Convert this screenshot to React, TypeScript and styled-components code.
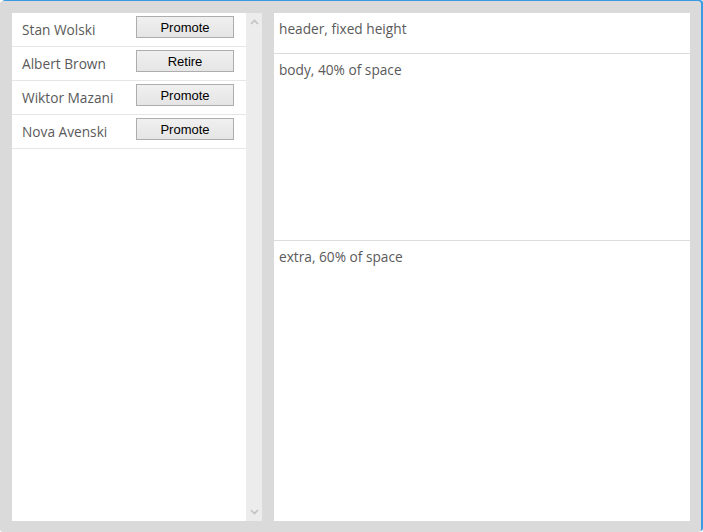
import styled, { createGlobalStyle } from "styled-components";

const GlobalStyle = createGlobalStyle`
  html, body {
    margin: 0;
    padding: 0;
    background: #ffffff;
  }
  * {
    box-sizing: border-box;
  }
`;

const StFrame = styled.div`
  display: flex;
  gap: 12px;
  width: 701px;
  height: 531px;
  margin-top: 1px;
  padding: 12px 11px 11px 12px;
  background-color: #dadada;
  border-radius: 3px;
  box-shadow: 2px -1px 0 #3a9be2;
  font-family: "Open Sans", "Noto Sans", sans-serif;
  font-size: 13.7px;
  color: #5a5a5a;
`;

const StListPanel = styled.div`
  display: flex;
  width: 250px;
  background-color: #ffffff;
`;

const StList = styled.div`
  flex: 1 0;
  display: flex;
  flex-direction: column;
`;

const StRow = styled.div`
  display: flex;
  height: 34px;
  padding: 0 12px 0 10px;
  border-bottom: 1px solid #e6e6e6;
`;

const StName = styled.span`
  width: 114px;
  line-height: 33px;
  white-space: nowrap;
`;

const StButton = styled.button`
  width: 98px;
  height: 22px;
  margin-top: 3px;
  padding: 0;
  border: 1px solid #adadad;
  border-radius: 0;
  background: linear-gradient(#f0f0f0, #e5e5e5);
  font-family: "Liberation Sans", Arial, sans-serif;
  font-size: 13px;
  color: #000000;
`;

const StScrollbar = styled.div`
  display: flex;
  flex-direction: column;
  justify-content: space-between;
  align-items: center;
  width: 16px;
  padding: 6px 0;
  background-color: #ececec;
`;

const StDetailPanel = styled.div`
  flex: 1 0;
  display: grid;
  grid-template-rows: 40px 4fr 6fr;
  background-color: #ffffff;
`;

const StSection = styled.div`
  padding: 6px 5px;
  line-height: 20px;
  & + & {
    border-top: 1px solid #dcdcdc;
  }
`;

const Chevron = ({ up }: { up?: boolean }) => (
  <svg width="9" height="6" viewBox="0 0 9 6">
    <path
      d={up ? "M1 5 L4.5 1.5 L8 5" : "M1 1 L4.5 4.5 L8 1"}
      fill="none"
      stroke="#c2c2c2"
      strokeWidth="1.6"
    />
  </svg>
);

const people = [
  { name: "Stan Wolski", action: "Promote" },
  { name: "Albert Brown", action: "Retire" },
  { name: "Wiktor Mazani", action: "Promote" },
  { name: "Nova Avenski", action: "Promote" },
];

const App = () => {
  return (
    <>
      <GlobalStyle />
      <StFrame>
        <StListPanel>
          <StList>
            {people.map((person) => (
              <StRow key={person.name}>
                <StName>{person.name}</StName>
                <StButton>{person.action}</StButton>
              </StRow>
            ))}
          </StList>
          <StScrollbar>
            <Chevron up />
            <Chevron />
          </StScrollbar>
        </StListPanel>
        <StDetailPanel>
          <StSection>header, fixed height</StSection>
          <StSection>body, 40% of space</StSection>
          <StSection>extra, 60% of space</StSection>
        </StDetailPanel>
      </StFrame>
    </>
  );
};

export default App;
